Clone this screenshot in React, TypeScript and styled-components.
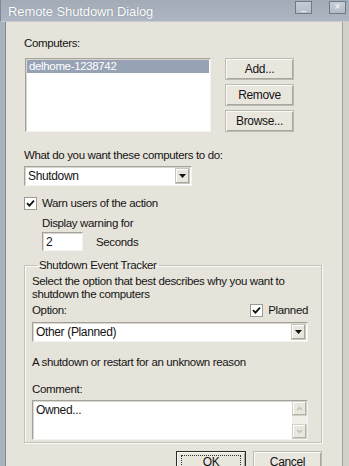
import React from "react";
import styled, { createGlobalStyle } from "styled-components";

const Global = createGlobalStyle`
  html, body {
    margin: 0;
    padding: 0;
    background: #d9d7d0;
  }
  body {
    font-family: "Liberation Sans", Arial, sans-serif;
    font-size: 11.5px;
    letter-spacing: -0.35px;
    color: #141414;
  }
`;

/* ─ window frame ─ */
const Window = styled.div`
  width: 349px;
  height: 466px;
  display: flex;
  flex-direction: column;
  overflow: hidden;
  background: #e6e3da;
`;

const TitleBar = styled.div`
  height: 21px;
  flex: none;
  display: flex;
  align-items: flex-start;
  padding: 0 3px 0 7px;
  background: linear-gradient(#a2acb8, #adb6c1);
  border-bottom: 1px solid #c4cad1;
  border-left: 1px solid #7f8a97;
`;

const Title = styled.div`
  flex: 1;
  color: #fff;
  font-size: 13px;
  line-height: 21px;
  letter-spacing: -0.1px;
  text-shadow: 0 0 1px rgba(60, 70, 85, 0.5);
  margin-top: 1px;
`;

const CaptionBtn = styled.div<{ $gap?: number }>`
  width: 15px;
  height: 11px;
  margin-left: ${(p) => p.$gap ?? 0}px;
  margin-top: 1px;
  border: 1px solid #6f7a88;
  background: linear-gradient(#c6ccd4, #b4bcc6);
  color: #fff;
  font-size: 10px;
  line-height: 10px;
  text-align: center;
  letter-spacing: 0;
`;

const Frame = styled.div`
  flex: 1;
  display: flex;
  border-left: 5px solid #a9b2bd;
  box-shadow: inset 1px 0 0 #7f8a97;
`;

const Client = styled.div`
  width: 338px;
  flex: none;
  padding: 14px 0 0 19px;
  box-sizing: border-box;
  border-right: 1px solid #a3a19a;
  display: flex;
  flex-direction: column;
  align-items: flex-start;
`;

const RightEdge = styled.div`
  flex: 1;
  background: #d2d0c9;
`;

/* ─ text ─ */
const Label = styled.div<{ $mt?: number; $ml?: number }>`
  line-height: 14px;
  height: 14px;
  white-space: nowrap;
  margin-top: ${(p) => p.$mt ?? 0}px;
  margin-left: ${(p) => p.$ml ?? 0}px;
`;

const Para = styled.div`
  line-height: 13px;
  margin-top: 3px;
`;

/* ─ computers list ─ */
const ListRow = styled.div`
  display: flex;
  gap: 14px;
  margin-top: 8px;
  margin-left: 1px;
`;

const ListBox = styled.div`
  width: 186px;
  height: 74px;
  box-sizing: border-box;
  background: #fff;
  border: 1px solid;
  border-color: #a4a29b #f4f3ef #f4f3ef #a4a29b;
  box-shadow: inset 1px 1px 0 #d8d6cf;
  padding: 1px 1px;
`;

const ListItem = styled.div<{ $selected?: boolean }>`
  height: 13px;
  line-height: 13px;
  padding-left: 2px;
  background: ${(p) => (p.$selected ? "#97a3b5" : "transparent")};
  color: ${(p) => (p.$selected ? "#fff" : "inherit")};
`;

const ButtonCol = styled.div`
  display: flex;
  flex-direction: column;
  gap: 4px;
`;

const Button = styled.div<{ $w?: number; $default?: boolean }>`
  width: ${(p) => p.$w ?? 69}px;
  height: 22px;
  box-sizing: border-box;
  display: flex;
  align-items: center;
  justify-content: center;
  background: #e9e6de;
  border: 1px solid ${(p) => (p.$default ? "#2b2b2b" : "#bdbab2")};
  box-shadow: inset 1px 1px 0 #faf9f6, inset -1px -1px 0 #a9a69e;
  font-size: 12px;
  position: relative;
`;

const FocusRect = styled.div`
  position: absolute;
  inset: 3px 4px;
  border: 1px dotted #333;
`;

/* ─ combo ─ */
const Combo = styled.div<{ $w: number; $mt: number }>`
  width: ${(p) => p.$w}px;
  height: 20px;
  margin-top: ${(p) => p.$mt}px;
  box-sizing: border-box;
  display: flex;
  align-items: center;
  background: #fff;
  border: 1px solid;
  border-color: #a4a29b #f4f3ef #f4f3ef #a4a29b;
  box-shadow: inset 1px 1px 0 #d8d6cf;
  padding: 0 1px 0 3px;
`;

const ComboText = styled.div`
  flex: 1;
  font-size: 12px;
`;

const DropBtn = styled.div`
  width: 15px;
  height: 16px;
  box-sizing: border-box;
  display: flex;
  align-items: center;
  justify-content: center;
  background: #e9e6de;
  border: 1px solid #c9c6be;
  box-shadow: inset -1px -1px 0 #a9a69e, inset 1px 1px 0 #fff;
`;

const Caret = () => (
  <svg width="7" height="4" viewBox="0 0 7 4">
    <path d="M0 0h7L3.5 4z" fill="#111" />
  </svg>
);

/* ─ checkbox ─ */
const CheckRow = styled.div<{ $mt?: number }>`
  display: flex;
  align-items: center;
  gap: 5px;
  margin-top: ${(p) => p.$mt ?? 0}px;
  line-height: 14px;
`;

const Box = styled.div`
  width: 13px;
  height: 13px;
  box-sizing: border-box;
  background: #fff;
  border: 1px solid #9c9a93;
  display: flex;
  align-items: center;
  justify-content: center;
`;

const Check = () => (
  <Box>
    <svg width="9" height="9" viewBox="0 0 9 9">
      <path d="M1 4.2l2.4 2.4L8 1.6" stroke="#111" strokeWidth="1.8" fill="none" />
    </svg>
  </Box>
);

/* ─ seconds ─ */
const SecondsRow = styled.div`
  display: flex;
  align-items: center;
  gap: 13px;
  margin: 2px 0 0 18px;
`;

const NumInput = styled.div`
  width: 41px;
  height: 19px;
  box-sizing: border-box;
  background: #fff;
  border: 1px solid;
  border-color: #a4a29b #f4f3ef #f4f3ef #a4a29b;
  box-shadow: inset 1px 1px 0 #d8d6cf;
  padding: 2px 0 0 3px;
  font-size: 12px;
`;

/* ─ group ─ */
const Group = styled.fieldset`
  width: 298px;
  box-sizing: border-box;
  margin: 7px 0 0 0;
  padding: 0 13px 2px 7px;
  min-width: 0;
  border: 1px solid #c4c1b8;
  box-shadow: 1px 1px 0 #fbfaf7, inset 1px 1px 0 #fbfaf7;
`;

const Legend = styled.legend`
  padding: 0 2px;
  margin-left: 5px;
  line-height: 14px;
`;

const OptionRow = styled.div`
  display: flex;
  align-items: center;
  justify-content: space-between;
  margin-top: 2px;
  height: 14px;
`;

const CommentBox = styled.div`
  height: 40px;
  margin-top: 4px;
  box-sizing: border-box;
  display: flex;
  background: #fff;
  border: 1px solid;
  border-color: #a4a29b #f4f3ef #f4f3ef #a4a29b;
  box-shadow: inset 1px 1px 0 #d8d6cf;
`;

const CommentText = styled.div`
  flex: 1;
  padding: 2px 0 0 3px;
  font-size: 12px;
`;

const ScrollBar = styled.div`
  width: 15px;
  display: flex;
  flex-direction: column;
  justify-content: space-between;
  background: #f1efe9;
`;

const ScrollBtn = styled.div`
  height: 15px;
  box-sizing: border-box;
  display: flex;
  align-items: center;
  justify-content: center;
  background: #e9e6de;
  border: 1px solid #d2cfc7;
  box-shadow: inset -1px -1px 0 #b5b2aa, inset 1px 1px 0 #fff;
`;

const Chevron = ({ up }: { up?: boolean }) => (
  <svg width="7" height="5" viewBox="0 0 7 5">
    <path
      d={up ? "M1 4l2.5-2.5L6 4" : "M1 1l2.5 2.5L6 1"}
      stroke="#bdbab3"
      strokeWidth="1.2"
      fill="none"
    />
  </svg>
);

const Footer = styled.div`
  display: flex;
  gap: 7px;
  margin: 8px 0 0 152px;
`;

const App: React.FC = () => {
  return (
    <>
      <Global />
      <Window>
        <TitleBar>
          <Title>Remote Shutdown Dialog</Title>
          <CaptionBtn>_</CaptionBtn>
          <CaptionBtn $gap={17}>×</CaptionBtn>
        </TitleBar>
        <Frame>
          <Client>
            <Label>Computers:</Label>
            <ListRow>
              <ListBox>
                <ListItem $selected>delhome-1238742</ListItem>
              </ListBox>
              <ButtonCol>
                <Button>Add...</Button>
                <Button>Remove</Button>
                <Button>Browse...</Button>
              </ButtonCol>
            </ListRow>

            <Label $mt={16}>What do you want these computers to do:</Label>
            <Combo $w={168} $mt={4}>
              <ComboText>Shutdown</ComboText>
              <DropBtn>
                <Caret />
              </DropBtn>
            </Combo>

            <CheckRow $mt={10}>
              <Check />
              <span>Warn users of the action</span>
            </CheckRow>
            <Label $mt={6} $ml={18}>
              Display warning for
            </Label>
            <SecondsRow>
              <NumInput>2</NumInput>
              <span>Seconds</span>
            </SecondsRow>

            <Group>
              <Legend>Shutdown Event Tracker</Legend>
              <Para>
                Select the option that best describes why you want to
                <br />
                shutdown the computers
              </Para>
              <OptionRow>
                <span>Option:</span>
                <CheckRow>
                  <Check />
                  <span>Planned</span>
                </CheckRow>
              </OptionRow>
              <Combo $w={276} $mt={5}>
                <ComboText>Other (Planned)</ComboText>
                <DropBtn>
                  <Caret />
                </DropBtn>
              </Combo>
              <Label $mt={13}>A shutdown or restart for an unknown reason</Label>
              <Label $mt={13}>Comment:</Label>
              <CommentBox>
                <CommentText>Owned...</CommentText>
                <ScrollBar>
                  <ScrollBtn>
                    <Chevron up />
                  </ScrollBtn>
                  <ScrollBtn>
                    <Chevron />
                  </ScrollBtn>
                </ScrollBar>
              </CommentBox>
            </Group>

            <Footer>
              <Button $w={70} $default>
                <FocusRect />
                OK
              </Button>
              <Button>Cancel</Button>
            </Footer>
          </Client>
          <RightEdge />
        </Frame>
      </Window>
    </>
  );
};

export default App;
